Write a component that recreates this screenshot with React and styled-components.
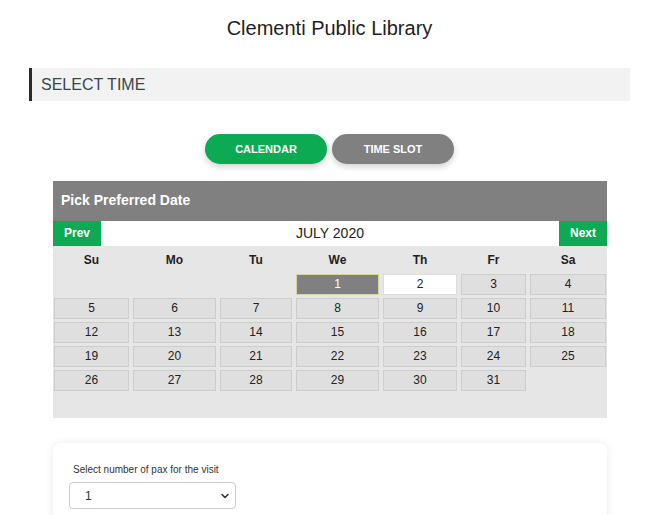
import styled, { createGlobalStyle } from 'styled-components';

const GREEN = '#0caa52';
const GREY = '#808080';

const weekDays = ['Su', 'Mo', 'Tu', 'We', 'Th', 'Fr', 'Sa'];

const GlobalStyle = createGlobalStyle`
  body {
    margin: 0;
    background: #fff;
    font-family: "Liberation Sans", Arial, sans-serif;
    color: #222;
  }
`;

export default function App() {
  const cells = [];
  for (let i = 0; i < 3; i++) cells.push({ key: 'blank' + i, blank: true });
  for (let d = 1; d <= 31; d++) cells.push({ key: 'd' + d, day: d });

  return (
    <>
      <GlobalStyle />
      <Page>
        <Title>Clementi Public Library</Title>
        <SectionBar>SELECT TIME</SectionBar>

        <Tabs>
          <TabButton $active>CALENDAR</TabButton>
          <TabButton>TIME SLOT</TabButton>
        </Tabs>

        <Calendar>
          <CalendarHeader>Pick Preferred Date</CalendarHeader>
          <NavRow>
            <NavButton>Prev</NavButton>
            <Month>JULY 2020</Month>
            <NavButton>Next</NavButton>
          </NavRow>
          <Grid>
            {weekDays.map((d) => (
              <DayHead key={d}>{d}</DayHead>
            ))}
            {cells.map((c) =>
              c.blank ? (
                <Blank key={c.key} />
              ) : (
                <DateCell
                  key={c.key}
                  $selected={c.day === 1}
                  $today={c.day === 2}
                >
                  {c.day}
                </DateCell>
              )
            )}
          </Grid>
        </Calendar>

        <PaxCard>
          <PaxLabel>Select number of pax for the visit</PaxLabel>
          <Select>
            <span>1</span>
            <svg width="10" height="10" viewBox="0 0 10 10">
              <path
                d="M2 3.5 L5 6.5 L8 3.5"
                fill="none"
                stroke="#333"
                strokeWidth="1.6"
                strokeLinecap="round"
                strokeLinejoin="round"
              />
            </svg>
          </Select>
        </PaxCard>
      </Page>
    </>
  );
}

const Page = styled.div`
  width: 601px;
  margin-left: 29px;
  display: flex;
  flex-direction: column;
`;

const Title = styled.h1`
  margin: 0;
  padding-top: 16px;
  font-size: 20px;
  line-height: 24px;
  font-weight: normal;
  text-align: center;
  color: #1e1e1e;
`;

const SectionBar = styled.div`
  margin-top: 28px;
  height: 33px;
  line-height: 33px;
  padding-left: 9px;
  border-left: 3px solid #2b2b2b;
  background: #f2f2f2;
  font-size: 16px;
  color: #37474f;
`;

const Tabs = styled.div`
  margin-top: 33px;
  display: flex;
  justify-content: center;
  gap: 5px;
`;

const TabButton = styled.button`
  width: 122px;
  height: 30px;
  border: none;
  border-radius: 15px;
  background: ${(p) => (p.$active ? GREEN : GREY)};
  color: #fff;
  font-family: "Liberation Sans", Arial, sans-serif;
  font-size: 11px;
  font-weight: bold;
  box-shadow: 0 3px 6px rgba(0, 0, 0, 0.18);
  cursor: pointer;
`;

const Calendar = styled.div`
  margin-top: 17px;
  margin-left: 24px;
  width: 554px;
  background: #e6e6e6;
`;

const CalendarHeader = styled.div`
  height: 40px;
  line-height: 38px;
  padding-left: 8px;
  background: ${GREY};
  color: #fff;
  font-size: 14px;
  font-weight: bold;
`;

const NavRow = styled.div`
  display: flex;
  height: 25px;
  background: #fff;
`;

const NavButton = styled.div`
  width: 48px;
  background: ${GREEN};
  color: #fff;
  font-size: 12px;
  font-weight: bold;
  line-height: 25px;
  text-align: center;
`;

const Month = styled.div`
  flex: 1;
  text-align: center;
  line-height: 25px;
  font-size: 14px;
  color: #222;
`;

const Grid = styled.div`
  display: grid;
  grid-template-columns: 75px 83px 72px 83px 74px 65px 76px;
  grid-template-rows: 22px repeat(5, 21px);
  column-gap: 4px;
  row-gap: 3px;
  padding: 3px 2px 27px 1px;
`;

const DayHead = styled.div`
  text-align: center;
  line-height: 22px;
  font-size: 12px;
  font-weight: bold;
  color: #222;
`;

const Blank = styled.div``;

const DateCell = styled.div`
  box-sizing: border-box;
  text-align: center;
  line-height: 19px;
  font-size: 12px;
  border: 1px solid
    ${(p) => (p.$selected ? '#d8d49c' : p.$today ? '#dddddd' : '#cdcdcd')};
  background: ${(p) => (p.$selected ? GREY : p.$today ? '#fff' : '#e0dfdf')};
  color: ${(p) => (p.$selected ? '#fff' : '#222')};
`;

const PaxCard = styled.div`
  margin-top: 25px;
  margin-left: 24px;
  width: 554px;
  padding: 20px 16px 20px;
  box-sizing: border-box;
  background: #fff;
  border-radius: 8px;
  box-shadow: 0 0 10px rgba(0, 0, 0, 0.08);
`;

const PaxLabel = styled.div`
  padding-left: 4px;
  font-size: 10px;
  line-height: 14px;
  color: #333;
`;

const Select = styled.div`
  margin-top: 5px;
  width: 167px;
  height: 27px;
  box-sizing: border-box;
  border: 1px solid #cccccc;
  border-radius: 4px;
  display: flex;
  align-items: center;
  justify-content: space-between;
  padding: 0 5px 0 15px;
  font-size: 12px;
  color: #333;
`;
